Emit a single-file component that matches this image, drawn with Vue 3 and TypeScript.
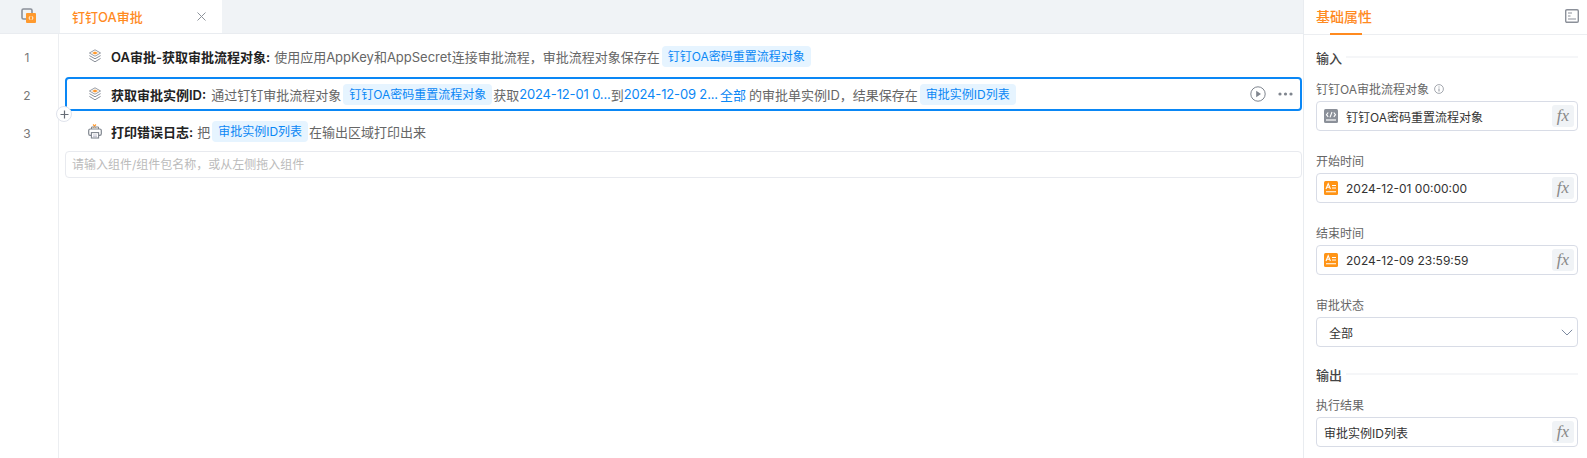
<script setup lang="ts">
interface Piece { t: string; k: 'n' | 'chip' | 'link' | 'link gap' }
interface Row { title: string; icon: 'stack' | 'print'; pieces: Piece[]; active?: boolean }
const rows: Row[] = [
  { title: 'OA审批-获取审批流程对象:', icon: 'stack', pieces: [
    { t: '使用应用AppKey和AppSecret连接审批流程，审批流程对象保存在', k: 'n' },
    { t: '钉钉OA密码重置流程对象', k: 'chip' } ] },
  { title: '获取审批实例ID:', icon: 'stack', active: true, pieces: [
    { t: '通过钉钉审批流程对象', k: 'n' },
    { t: '钉钉OA密码重置流程对象', k: 'chip' },
    { t: '获取', k: 'n' },
    { t: '2024-12-01 0...', k: 'link' },
    { t: '到', k: 'n' },
    { t: '2024-12-09 2...', k: 'link' },
    { t: '全部', k: 'link gap' },
    { t: '的审批单实例ID，结果保存在', k: 'n' },
    { t: '审批实例ID列表', k: 'chip' } ] },
  { title: '打印错误日志:', icon: 'print', pieces: [
    { t: '把', k: 'n' },
    { t: '审批实例ID列表', k: 'chip' },
    { t: '在输出区域打印出来', k: 'n' } ] },
]
const dateFields = [
  { label: '开始时间', value: '2024-12-01 00:00:00' },
  { label: '结束时间', value: '2024-12-09 23:59:59' },
]
</script>

<template>
  <div class="app">
    <main class="main">
      <div class="tabbar">
        <div class="tabicon">
          <svg width="16" height="16" viewBox="0 0 16 16">
            <rect x="1" y="1" width="10" height="10" rx="1.5" fill="none" stroke="#8b9099" stroke-width="1.6" />
            <rect x="5" y="5" width="10" height="10" rx="1" fill="#ff9a2e" />
            <path d="M9 8.2 8 10l1 1.8M11 8.2l1 1.8-1 1.8" fill="none" stroke="#fff" stroke-width=".9" />
          </svg>
        </div>
        <div class="tab">
          <span class="tabname">钉钉OA审批</span>
          <svg class="close" width="9" height="9" viewBox="0 0 9 9"><path d="M.5.5l8 8M8.5.5l-8 8" stroke="#8d929a" stroke-width="1" /></svg>
        </div>
      </div>
      <div class="editor">
        <div class="gutter">
          <div v-for="(_, i) in rows" :key="i" class="num">{{ i + 1 }}</div>
        </div>
        <div class="content">
          <div v-for="(r, i) in rows" :key="i" class="row" :class="{ active: r.active }">
            <svg v-if="r.icon === 'stack'" class="ricon" width="14" height="14" viewBox="0 0 14 14">
              <path d="M7 .8 12.6 4 7 7.2 1.4 4Z" fill="#fff" stroke="#8b9099" stroke-width=".9" />
              <path d="M7 2.5 10 4 7 5.5 4 4Z" fill="#ff9a2e" />
              <path d="M1.4 6.6 7 9.8l5.6-3.2M1.4 9.4 7 12.8l5.6-3.4" fill="none" stroke="#8b9099" stroke-width="1" />
            </svg>
            <svg v-else class="ricon" width="14" height="15" viewBox="0 0 14 15">
              <path d="M5 .5l3 3M8 .5l-3 3" stroke="#ff9a2e" stroke-width="1.1" />
              <path d="M3.5 5V3h7v2" fill="none" stroke="#7f858e" stroke-width="1" />
              <rect x=".7" y="5" width="12.6" height="6.4" rx="1.6" fill="none" stroke="#7f858e" stroke-width="1.2" />
              <rect x="3.4" y="8.6" width="7.2" height="5.4" fill="#fff" stroke="#7f858e" stroke-width="1.1" />
              <path d="M5 11h4M5 12.6h4" stroke="#aab" stroke-width=".7" />
            </svg>
            <b class="title">{{ r.title }}</b>
            <span v-for="(p, j) in r.pieces" :key="j" :class="p.k">{{ p.t }}</span>
            <div v-if="r.active" class="actions">
              <svg width="16" height="16" viewBox="0 0 16 16">
                <circle cx="8" cy="8" r="7.2" fill="none" stroke="#7f858e" stroke-width="1" />
                <path d="M6.2 4.8v6.4L11 8Z" fill="#7f858e" />
              </svg>
              <svg width="15" height="4" viewBox="0 0 15 4">
                <circle cx="2" cy="2" r="1.6" fill="#7f858e" /><circle cx="7.5" cy="2" r="1.6" fill="#7f858e" /><circle cx="13" cy="2" r="1.6" fill="#7f858e" />
              </svg>
            </div>
            <span v-if="r.active" class="plus">
              <svg width="9" height="9" viewBox="0 0 9 9"><path d="M4.5.5v8M.5 4.5h8" stroke="#666c75" stroke-width="1.2" /></svg>
            </span>
          </div>
          <div class="addbox">请输入组件/组件包名称，或从左侧拖入组件</div>
        </div>
      </div>
    </main>
    <aside class="panel">
      <div class="phead">
        <span class="ptitle">基础属性</span>
        <svg width="14" height="14" viewBox="0 0 14 14">
          <rect x=".7" y=".7" width="12.6" height="12.6" rx="1.2" fill="#fff" stroke="#8b9099" stroke-width="1.4" />
          <path d="M3 4h4M3 7h2.5M3 10h8" stroke="#8b9099" stroke-width="1.2" />
        </svg>
      </div>
      <div class="pbody">
        <div class="sec"><span>输入</span><i></i></div>
        <div class="label">钉钉OA审批流程对象
          <svg class="info" width="10" height="10" viewBox="0 0 10 10">
            <circle cx="5" cy="5" r="4.4" fill="none" stroke="#8d929a" stroke-width=".8" />
            <path d="M5 2.5v1M5 4.5v3" stroke="#8d929a" stroke-width="1" />
          </svg>
        </div>
        <div class="field">
          <svg class="ficon" width="14" height="14" viewBox="0 0 14 14">
            <rect width="14" height="14" rx="1.5" fill="#8b9099" />
            <path d="M4.2 3.5 2.5 5.7l1.7 2.2M9.8 3.5l1.7 2.2-1.7 2.2M8 3 6 8.4" fill="none" stroke="#fff" stroke-width="1.1" />
            <path d="M2 11h10" stroke="#fff" stroke-width="1.2" />
          </svg>
          <span class="val">钉钉OA密码重置流程对象</span>
          <span class="fx">fx</span>
        </div>
        <template v-for="f in dateFields" :key="f.label">
          <div class="label">{{ f.label }}</div>
          <div class="field">
            <svg class="ficon" width="14" height="14" viewBox="0 0 14 14">
              <rect width="14" height="14" rx="1.5" fill="#ff9416" />
              <path d="M2 8 4.2 2.6 6.4 8M3 6.2h2.4" fill="none" stroke="#fff" stroke-width="1.1" />
              <path d="M8 4.5h4M8 7h4M2 10.8h10" stroke="#fff" stroke-width="1.1" />
            </svg>
            <span class="val">{{ f.value }}</span>
            <span class="fx">fx</span>
          </div>
        </template>
        <div class="label">审批状态</div>
        <div class="field select">
          <span class="val">全部</span>
          <svg width="12" height="7" viewBox="0 0 12 7"><path d="M.8.8 6 6 11.2.8" fill="none" stroke="#7d8aa0" stroke-width="1" /></svg>
        </div>
        <div class="sec out"><span>输出</span><i></i></div>
        <div class="label">执行结果</div>
        <div class="field plain">
          <span class="val">审批实例ID列表</span>
          <span class="fx">fx</span>
        </div>
      </div>
    </aside>
  </div>
</template>

<style>
html, body { margin: 0; background: #fff; overflow: hidden; }
</style>

<style scoped>
.app {
  display: flex;
  width: 1587px;
  height: 458px;
  overflow: hidden;
  font-family: Inter, "Noto Sans CJK SC", sans-serif;
  font-size: 13px;
  color: #333;
  background: #fff;
}
.main { flex: 1; min-width: 0; display: flex; flex-direction: column; }
.tabbar { height: 33px; display: flex; background: #f0f3f6; border-bottom: 1px solid #e9ecf0; flex: none; }
.tabicon { width: 60px; display: flex; align-items: center; justify-content: center; padding: 0 2px 2px 0; box-sizing: border-box; }
.tab { width: 162px; height: 33px; background: #fff; display: flex; align-items: center; justify-content: space-between; padding: 0 16px 0 12px; box-sizing: border-box; }
.tabname { color: #ff8a1f; font-size: 13px; font-weight: 500; }
.editor { flex: 1; display: flex; min-height: 0; }
.gutter { width: 58px; border-right: 1px solid #eceef1; padding-top: 5px; flex: none; }
.num { height: 38px; line-height: 38px; text-align: center; color: #777; font-size: 12px; padding-right: 4px; box-sizing: border-box; }
.content { flex: 1; min-width: 0; padding: 3px 1px 0 6px; }
.row { position: relative; height: 38px; box-sizing: border-box; display: flex; align-items: center; padding-left: 23px; color: #666; white-space: nowrap; }
.row.active { height: 34px; margin: 2px 0 1px; border: 2px solid #0a87f5; border-radius: 4px; padding-left: 21px; }
.ricon { flex: none; margin-right: 9px; }
.title { color: #222; font-weight: 600; margin-right: 4px; }
.active .title { margin-right: 5px; }
.chip { background: #e6f4ff; color: #0a87f5; border-radius: 4px; padding: 0 6px; height: 21px; line-height: 21px; margin: 0 1px 0 2px; font-size: 12px; }
.link { color: #0a87f5; letter-spacing: -0.15px; }
.link.gap { margin: 0 3px 0 2px; letter-spacing: 0; }
.actions { position: absolute; right: 7px; top: 5px; display: flex; align-items: center; gap: 12px; height: 20px; }
.plus { position: absolute; left: -11px; bottom: -13px; width: 14px; height: 14px; background: #fff; border: 1px solid #dfe3ec; border-radius: 50%; display: flex; align-items: center; justify-content: center; }
.addbox { height: 27px; margin-top: 1px; line-height: 26px; box-sizing: border-box; border: 1px solid #e8eaef; border-radius: 4px; padding-left: 6px; font-size: 12px; color: #bbb; }
.panel { width: 284px; flex: none; border-left: 1px solid #e9ecf0; box-sizing: border-box; }
.phead { height: 35px; border-bottom: 1px solid #eceef1; box-sizing: border-box; display: flex; align-items: center; justify-content: space-between; padding: 0 8px 2px 12px; position: relative; }
.ptitle { color: #ff8a1f; font-size: 14px; font-weight: 500; }
.ptitle::after { content: ""; position: absolute; left: 26px; bottom: -1px; width: 32px; height: 2px; background: #ff8a1f; }
.pbody { padding: 12px 9px 0 12px; }
.sec { height: 20px; display: flex; align-items: center; gap: 4px; margin-bottom: 11px; color: #444; font-weight: 500; }
.sec i { flex: 1; height: 2px; background: #f5f6f8; }
.sec.out { margin-bottom: 10px; }
.label { height: 20px; padding-top: 1px; box-sizing: border-box; margin-bottom: 3px; color: #666; font-size: 12px; display: flex; align-items: center; }
.info { margin-left: 5px; }
.field { height: 30px; box-sizing: border-box; border: 1px solid #d8dce6; border-radius: 4px; display: flex; align-items: center; padding: 0 3px 0 7px; margin-bottom: 19px; }
.field.select { justify-content: space-between; padding: 0 4px 0 12px; margin-bottom: 17px; }
.field.plain { padding-left: 7px; }
.ficon { flex: none; margin-right: 8px; }
.val { flex: 1; color: #333; font-size: 12px; }
.select .val { flex: none; }
.fx { width: 22px; height: 22px; background: #f0f3f6; border-radius: 3px; text-align: center; line-height: 21px; font-family: "Liberation Serif", serif; font-style: italic; font-size: 17px; color: #888; flex: none; }
</style>
